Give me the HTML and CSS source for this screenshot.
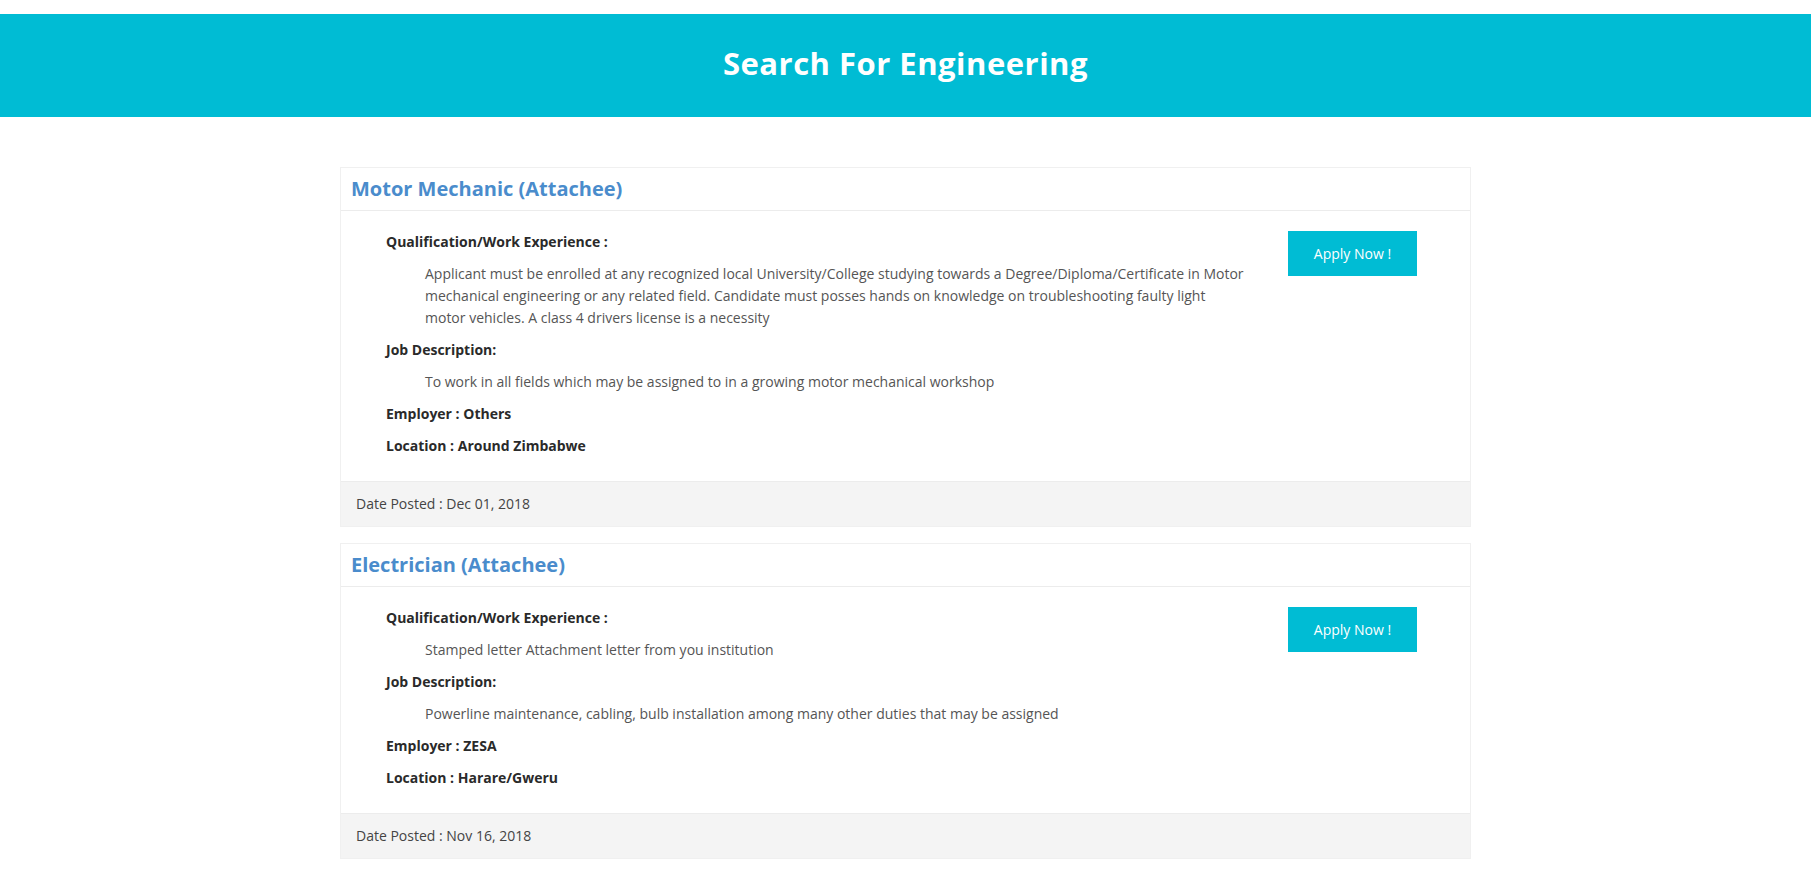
FILE: index.html
```html
<!DOCTYPE html>
<html>
<head>
<meta charset="utf-8">
<link rel="stylesheet" href="styles.css">
</head>
<body>
<header class="banner">
  <h1 class="banner-title">Search For Engineering</h1>
</header>
<main class="jobs">
  <article class="job">
    <div class="job-head"><h2 class="job-title">Motor Mechanic (Attachee)</h2></div>
    <div class="job-body">
      <div class="job-info">
        <p class="label">Qualification/Work Experience :</p>
        <p class="desc">Applicant must be enrolled at any recognized local University/College studying towards a Degree/Diploma/Certificate in Motor mechanical engineering or any related field. Candidate must posses hands on knowledge on troubleshooting faulty light motor vehicles. A class 4 drivers license is a necessity</p>
        <p class="label">Job Description:</p>
        <p class="desc">To work in all fields which may be assigned to in a growing motor mechanical workshop</p>
        <p class="label">Employer : Others</p>
        <p class="label">Location : Around Zimbabwe</p>
      </div>
      <div class="job-action"><a class="apply" href="#">Apply Now !</a></div>
    </div>
    <div class="job-foot">Date Posted : Dec 01, 2018</div>
  </article>
  <article class="job">
    <div class="job-head"><h2 class="job-title">Electrician (Attachee)</h2></div>
    <div class="job-body">
      <div class="job-info">
        <p class="label">Qualification/Work Experience :</p>
        <p class="desc">Stamped letter Attachment letter from you institution</p>
        <p class="label">Job Description:</p>
        <p class="desc">Powerline maintenance, cabling, bulb installation among many other duties that may be assigned</p>
        <p class="label">Employer : ZESA</p>
        <p class="label">Location : Harare/Gweru</p>
      </div>
      <div class="job-action"><a class="apply" href="#">Apply Now !</a></div>
    </div>
    <div class="job-foot">Date Posted : Nov 16, 2018</div>
  </article>
</main>
</body>
</html>
```
FILE: styles.css
```css
* { box-sizing: border-box; }
html, body { margin: 0; padding: 0; background: #fff; }
body {
  font-family: "Open Sans", "Liberation Sans", sans-serif;
  font-size: 14px;
  color: #555;
  padding-top: 14px;
}
.banner {
  background: #00bcd4;
  height: 103px;
  display: flex;
  align-items: center;
  justify-content: center;
  padding-bottom: 4px;
}
.banner-title {
  margin: 0;
  color: #fff;
  font-size: 31px;
  font-weight: 700;
  letter-spacing: 0.5px;
  line-height: 1;
}
.jobs {
  width: 1131px;
  margin: 50px auto 0;
  display: flex;
  flex-direction: column;
  gap: 16px;
}
.job {
  border: 1px solid #f0f0f0;
  background: #fff;
}
.job-head {
  padding: 9px 10px;
  border-bottom: 1px solid #ececec;
}
.job-title {
  margin: 0;
  font-size: 20px;
  line-height: 24px;
  font-weight: 700;
  color: #4a8ccc;
}
.job-body {
  display: flex;
  padding: 20px 20px 14px;
}
.job-info {
  flex: 1;
  padding-left: 25px;
  padding-right: 13px;
}
.job-info p {
  margin: 0 0 10px;
  line-height: 22px;
}
.label {
  font-weight: 700;
  color: #2a2a2a;
  font-size: 14px;
}
.desc {
  padding-left: 39px;
  color: #555;
  font-size: 14px;
}
.job-action {
  width: 189px;
  padding-left: 27px;
}
.apply {
  display: inline-flex;
  align-items: center;
  justify-content: center;
  width: 129px;
  height: 45px;
  background: #00bcd4;
  color: #fff;
  text-decoration: none;
  font-size: 14px;
}
.job-foot {
  background: #f4f4f4;
  border-top: 1px solid #ececec;
  padding: 12px 15px;
  line-height: 20px;
  font-size: 14px;
  color: #444;
}
```
